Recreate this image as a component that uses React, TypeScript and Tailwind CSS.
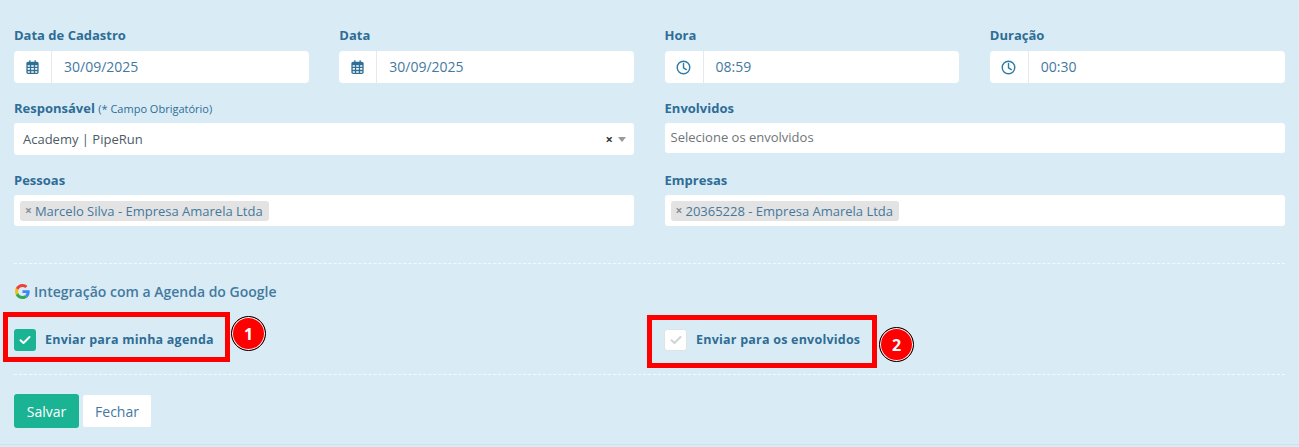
import React from "react";

const font = { fontFamily: '"Open Sans", sans-serif' };

function Calendar() {
  return (
    <svg width="13" height="14" viewBox="0 0 448 512" fill="#2f6f94">
      <path d="M152 24c0-13-11-24-24-24s-24 11-24 24v40H64C29 64 0 93 0 128v16 48 256c0 35 29 64 64 64h320c35 0 64-29 64-64V192v-48-16c0-35-29-64-64-64h-40V24c0-13-11-24-24-24s-24 11-24 24v40H152V24zM48 192h80v56H48v-56zm0 104h80v64H48v-64zm128 0h96v64h-96v-64zm144 0h80v64h-80v-64zm80-48h-80v-56h80v56zm-128 0h-96v-56h96v56zM48 408h80v56H64c-9 0-16-7-16-16v-40zm128 0h96v56h-96v-56zm144 0h80v40c0 9-7 16-16 16h-64v-56z" />
    </svg>
  );
}

function Clock() {
  return (
    <svg width="15" height="15" viewBox="0 0 16 16" fill="none" stroke="#2f7ba6" strokeWidth="1.5" strokeLinecap="round" strokeLinejoin="round">
      <circle cx="8" cy="8" r="6.7" />
      <path d="M8 3.8V8.400L11 10.200" />
    </svg>
  );
}

function Label({ children }: { children: React.ReactNode }) {
  return <label className="block h-[16px] text-[13px] leading-[16px] font-bold text-[#2f6c96] whitespace-nowrap">{children}</label>;
}

function AddonField({ label, value, icon, iconW }: { label: string; value: string; icon: React.ReactNode; iconW: string }) {
  return (
    <div className="flex flex-col">
      <Label>{label}</Label>
      <div className="mt-[8px] flex h-[32px] rounded-[4px] bg-white">
        <div className={`flex items-center justify-center border-r border-[#e3e9ec] ${iconW}`}>{icon}</div>
        <div className="flex items-center pb-[1px] pl-[12px] text-[14px] text-[#44799f]">{value}</div>
      </div>
    </div>
  );
}

function Tag({ text }: { text: string }) {
  return (
    <span className="flex h-[20px] items-center rounded-[3px] bg-[#e3e3e3] pl-[5px] pr-[6px] text-[13px] leading-[20px] text-[#44799f] whitespace-nowrap">
      <span className="mr-[3px] text-[12px] font-bold text-[#8a8f93]">×</span>
      {text}
    </span>
  );
}

function GoogleG() {
  return (
    <svg width="15" height="15" viewBox="0 0 48 48">
      <path fill="#EA4335" d="M24 9.500c3.500 0 6.700 1.300 9.100 3.500l6.800-6.800C35.800 2.400 30.300 0 24 0 14.600 0 6.500 5.400 2.600 13.200l7.900 6.200C12.400 13.600 17.700 9.500 24 9.500z" />
      <path fill="#4285F4" d="M46.900 24.500c0-1.600-.1-3.100-.4-4.500H24v9h12.900c-.6 3-2.200 5.500-4.700 7.200l7.600 5.900c4.500-4.100 7.100-10.200 7.100-17.600z" />
      <path fill="#FBBC05" d="M10.500 28.600c-.5-1.400-.8-3-.8-4.600s.3-3.100.8-4.600l-7.900-6.200C.9 16.500 0 20.100 0 24s.9 7.500 2.600 10.800l7.900-6.200z" />
      <path fill="#34A853" d="M24 48c6.500 0 11.900-2.100 15.900-5.900l-7.600-5.900c-2.100 1.400-4.900 2.300-8.200 2.300-6.300 0-11.600-4.200-13.600-9.900l-7.900 6.200C6.500 42.600 14.600 48 24 48z" />
    </svg>
  );
}

function Badge({ n }: { n: number }) {
  return (
    <div className="flex h-[35px] w-[35px] items-center justify-center rounded-full border border-black bg-[#fe0000] shadow-[inset_0_0_0_1px_white] text-[16px] font-bold text-white" style={font}>
      {n}
    </div>
  );
}

export default function App() {
  return (
    <div className="relative h-[447px] w-[1299px] overflow-hidden bg-[#d9ecf5] px-[14px] pt-[27px]" style={font}>
      <div className="grid w-[1270.5px] grid-cols-4 gap-x-[30.67px]">
        <AddonField label="Data de Cadastro" value="30/09/2025" icon={<Calendar />} iconW="w-[38px]" />
        <AddonField label="Data" value="30/09/2025" icon={<Calendar />} iconW="w-[38px]" />
        <AddonField label="Hora" value="08:59" icon={<Clock />} iconW="w-[39px]" />
        <AddonField label="Duração" value="00:30" icon={<Clock />} iconW="w-[39px]" />

        <div className="col-span-2 mt-[17px]">
          <Label>
            Responsável <span className="text-[11px] font-normal">(* Campo Obrigatório)</span>
          </Label>
          <div className="mt-[7px] flex h-[32px] items-center justify-between rounded-[3px] bg-white pl-[9px] pr-[8px] pt-[1px] text-[13px] text-[#4d5b66]">
            <span>Academy | PipeRun</span>
            <span className="flex items-center gap-[5px]">
              <span className="text-[13px] font-bold leading-none text-[#333]">×</span>
              <span className="h-0 w-0 border-x-[4px] border-t-[5px] border-x-transparent border-t-[#999]" />
            </span>
          </div>
        </div>
        <div className="col-span-2 mt-[17px]">
          <Label>Envolvidos</Label>
          <div className="mt-[7px] flex h-[30px] items-center rounded-[3px] bg-white pl-[6px] text-[13px] text-[#6f7478]">
            Selecione os envolvidos
          </div>
        </div>

        <div className="col-span-2 mt-[17px]">
          <Label>Pessoas</Label>
          <div className="mt-[7px] flex h-[31px] items-center rounded-[3px] bg-white pl-[6px]">
            <Tag text="Marcelo Silva - Empresa Amarela Ltda" />
          </div>
        </div>
        <div className="col-span-2 mt-[17px]">
          <Label>Empresas</Label>
          <div className="mt-[7px] flex h-[31px] items-center rounded-[3px] bg-white pl-[6px]">
            <Tag text="20365228 - Empresa Amarela Ltda" />
          </div>
        </div>
      </div>

      <div className="mt-[37px] border-t border-dashed border-[#f4fafd]" />

      <div className="mt-[18px] flex h-[18px] items-center gap-[4px] pl-[1px] text-[14px] font-semibold text-[#44799f]">
        <GoogleG />
        <span>Integração com a Agenda do Google</span>
      </div>

      <div className="mt-[29px] flex h-[22px]">
        <div className="flex w-[650px] items-center gap-[9px]">
          <span className="flex h-[22px] w-[22px] items-center justify-center rounded-[3px] bg-[#1ab394]">
            <svg width="12" height="10" viewBox="0 0 12 10" fill="none" stroke="white" strokeWidth="2" strokeLinecap="round" strokeLinejoin="round"><path d="M1.500 5.200 4.500 8 10.500 2" /></svg>
          </span>
          <span className="text-[12.5px] font-bold tracking-[0.22px] text-[#2f6c96]">Enviar para minha agenda</span>
        </div>
        <div className="flex items-center gap-[9px]">
          <span className="flex h-[22px] w-[23px] items-center justify-center rounded-[3px] border border-[#dfe3e5] bg-white">
            <svg width="12" height="10" viewBox="0 0 12 10" fill="none" stroke="#d0d4d6" strokeWidth="2" strokeLinecap="round" strokeLinejoin="round"><path d="M1.500 5.200 4.500 8 10.500 2" /></svg>
          </span>
          <span className="text-[12.5px] font-bold tracking-[0.22px] text-[#2f6c96]">Enviar para os envolvidos</span>
        </div>
      </div>

      <div className="mt-[23px] border-t border-dashed border-[#f4fafd]" />

      <div className="mt-[19px] flex items-center gap-[4px]">
        <button className="h-[34px] w-[65px] rounded-[3px] bg-[#1ab394] text-[14px] text-white">Salvar</button>
        <button className="h-[32px] w-[68px] rounded-[2px] bg-white text-[14px] text-[#44799f]">Fechar</button>
      </div>

      <div className="absolute left-[3px] top-[312px] h-[50px] w-[227px] border-[5px] border-[#fe0000]" />
      <div className="absolute left-[647px] top-[315px] h-[53px] w-[230px] border-[5px] border-[#fe0000]" />
      <div className="absolute left-[231px] top-[316px]"><Badge n={1} /></div>
      <div className="absolute left-[879px] top-[327px]"><Badge n={2} /></div>
      <div className="absolute inset-x-0 bottom-[2px] border-b border-[#c9e2ee]" />
    </div>
  );
}
